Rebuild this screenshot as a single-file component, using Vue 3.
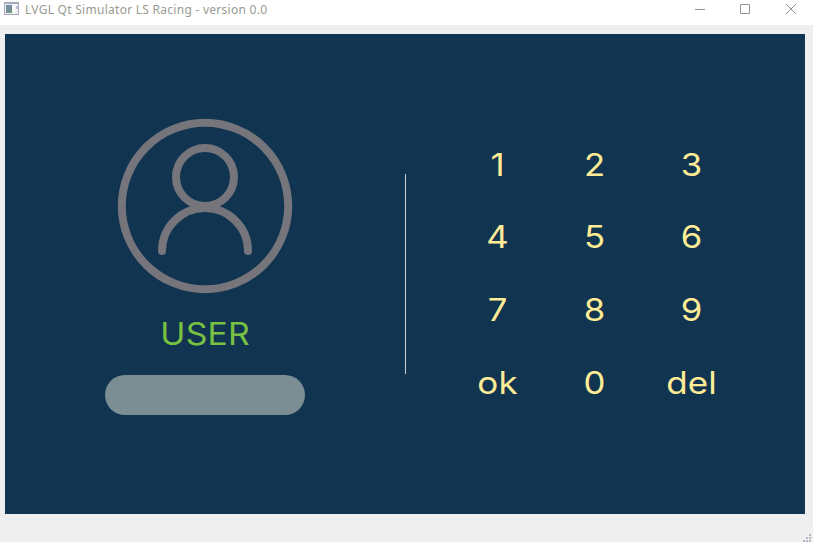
<script setup>
const keys = ['1', '2', '3', '4', '5', '6', '7', '8', '9', 'ok', '0', 'del']
</script>

<template>
  <div class="window">
    <header class="titlebar">
      <svg class="app-icon" width="16" height="15" viewBox="0 0 16 15">
        <rect x="0.5" y="0.5" width="14" height="12" fill="#edf0f5" stroke="#a9a8bc" />
        <path d="M0 1h15" stroke="#aaa9bd" stroke-width="2" />
        <rect x="2" y="3" width="6" height="8" fill="#78909b" />
        <path d="M5 11l3-4v4z" fill="#6ba274" />
        <rect x="9" y="3" width="2" height="8" fill="#fff" />
        <path d="M12 4h2v3h-2z" fill="#b5c4de" />
      </svg>
      <span class="title">LVGL Qt Simulator LS Racing - version 0.0</span>
      <div class="controls">
        <svg width="10" height="10" viewBox="0 0 10 10"><path d="M0 5.5h10" /></svg>
        <svg width="10" height="10" viewBox="0 0 10 10"><path d="M.5.5h9v9h-9z" /></svg>
        <svg width="10" height="10" viewBox="0 0 10 10"><path d="M0 0l10 10M10 0L0 10" /></svg>
      </div>
    </header>
    <main class="screen">
      <section class="login">
        <svg class="avatar" width="176" height="176" viewBox="0 0 176 176">
          <circle cx="88" cy="88" r="83.2" />
          <circle cx="88" cy="59" r="29" />
          <path d="M45 133a43 43 0 0 1 86 0" />
        </svg>
        <div class="name">USER</div>
        <div class="field"></div>
      </section>
      <div class="divider"></div>
      <section class="keypad">
        <div v-for="key in keys" :key="key" class="key" :class="{ word: key.length > 1 }">{{ key }}</div>
      </section>
    </main>
    <footer class="statusbar">
      <svg width="8" height="8" viewBox="0 0 8 8" fill="#b7b6c5">
        <path d="M6 0h2v2h-2zM3 3h2v2h-2zM6 3h2v2h-2zM0 6h2v2h-2zM3 6h2v2h-2zM6 6h2v2h-2z" />
      </svg>
    </footer>
  </div>
</template>

<style>
body { margin: 0; overflow: hidden; }
</style>

<style scoped>
.window {
  width: 813px;
  height: 542px;
  background: #efefef;
  display: flex;
  flex-direction: column;
}
.titlebar {
  height: 25px;
  box-sizing: border-box;
  padding: 2px 17px 0 4px;
  background: #fff;
  display: flex;
  align-items: flex-start;
}
.app-icon { margin-right: 5px; }
.title {
  font: 12px/16px "Noto Sans", sans-serif;
  letter-spacing: 0.27px;
  color: #999b8f;
  white-space: nowrap;
}
.controls {
  margin-left: auto;
  padding-top: 2px;
  display: flex;
}
.controls svg + svg { margin-left: 35px; }
.controls svg:last-child { margin-left: 36px; }
.controls path { fill: none; stroke: #93948a; stroke-width: 1; }
.screen {
  width: 800px;
  height: 480px;
  margin: 9px 0 0 5px;
  background: #113450;
  display: flex;
}
.login {
  width: 400px;
  display: flex;
  flex-direction: column;
  align-items: center;
  padding-top: 84px;
  box-sizing: border-box;
}
.avatar {
  fill: none;
  stroke: #75757b;
  stroke-width: 8;
  stroke-linecap: round;
}
.name {
  margin-top: 20px;
  height: 40px;
  font: 31px/40px Inter, sans-serif;
  letter-spacing: 0.2px;
  transform: scaleX(1.09);
  color: #79c142;
}
.field {
  margin-top: 21px;
  width: 200px;
  height: 40px;
  border-radius: 20px;
  background: #7b8e93;
}
.divider {
  width: 1px;
  height: 200px;
  margin-top: 140px;
  background: #cbd0d3;
}
.keypad {
  margin: 95px 0 0 43px;
  display: grid;
  grid-template-columns: repeat(3, 97px);
  grid-template-rows: 72px 72px 73px 73px;
  height: 290px;
}
.key {
  display: flex;
  align-items: center;
  justify-content: center;
  font: 400 31px/40px Inter, sans-serif;
  color: #ffec96;
  transform: scaleX(1.12);
}
.word { transform: scaleX(1.13); }
.statusbar {
  flex: 1;
  display: flex;
  justify-content: flex-end;
  align-items: flex-end;
  padding-right: 2px;
}
</style>
